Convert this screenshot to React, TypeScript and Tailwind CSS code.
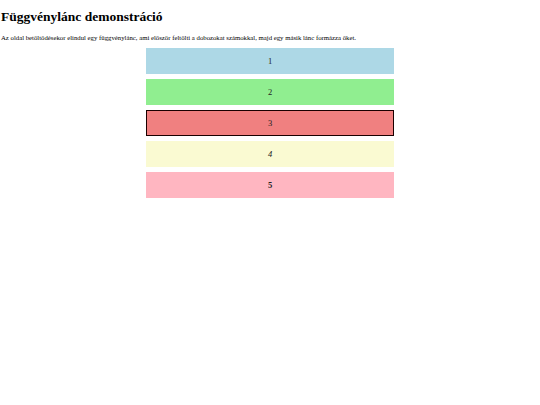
export default function App() {
  const boxes = [
    { n: "1", cls: "bg-[#add8e6]" },
    { n: "2", cls: "bg-[#90ee90]" },
    { n: "3", cls: "bg-[#f08080] border border-[#1a0000]" },
    { n: "4", cls: "bg-[#fafad2] italic" },
    { n: "5", cls: "bg-[#ffb6c1] font-bold" },
  ];
  return (
    <div className="min-h-[405px] bg-white text-black px-[1px]" style={{ fontFamily: '"Liberation Serif", "Times New Roman", serif' }}>
      <h1 className="pt-[9px] text-[13.5px] font-bold leading-[16px]">Függvénylánc demonstráció</h1>
      <p className="mt-[9px] text-[6.75px] leading-[8px]">
        Az oldal betöltődésekor elindul egy függvénylánc, ami először feltölti a dobozokat számokkal, majd egy másik lánc formázza őket.
      </p>
      <div className="mt-[6px] flex flex-col items-center gap-[5px]">
        {boxes.map((b) => (
          <div key={b.n} className={`w-[248px] h-[26px] flex items-center justify-center text-[8.5px] text-[#222] ${b.cls}`}>
            {b.n}
          </div>
        ))}
      </div>
    </div>
  );
}
